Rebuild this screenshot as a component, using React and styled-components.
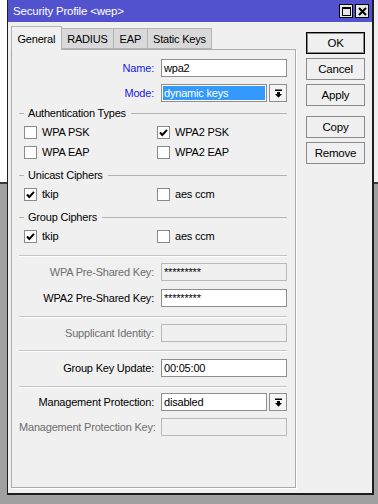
import React from "react";
import styled, { createGlobalStyle } from "styled-components";

const GlobalStyle = createGlobalStyle`
  html, body { margin: 0; padding: 0; }
  body {
    background: #a0a0a0;
    font-family: "Liberation Sans", Arial, sans-serif;
    font-size: 11px;
    letter-spacing: -0.2px;
    color: #000;
  }
`;

const Desktop = styled.div`
  position: relative;
  width: 378px;
  height: 504px;
  overflow: hidden;
  background: #a0a0a0;
`;

const BackWindow = styled.div`
  position: absolute;
  left: -10px;
  top: -10px;
  width: 398px;
  height: 192px;
  background: #f0f0f0;
  border-bottom: 2px solid #3a3a3a;
  display: flex;
`;

const BackList = styled.div`
  width: 17px;
  background: #ffffff;
`;

const Window = styled.section`
  position: absolute;
  left: 7px;
  top: 0;
  width: 367px;
  height: 495px;
  box-sizing: border-box;
  background: #f0f0f0;
  border-left: 1px solid #1e1e1e;
  border-right: 2px solid #1e1e1e;
  border-bottom: 2px solid #1e1e1e;
  display: flex;
  flex-direction: column;
`;

const TitleBar = styled.header`
  height: 22px;
  flex: none;
  background: #5252cf;
  color: #fff;
  display: flex;
  align-items: center;
  justify-content: space-between;
  padding: 0 3px 0 5px;
  font-size: 11.5px;
`;

const TitleButtons = styled.div`
  display: flex;
  gap: 2px;
`;

const TitleButton = styled.div`
  width: 14px;
  height: 14px;
  box-sizing: border-box;
  background: #e6e6e6;
  border: 1px solid #000;
  display: flex;
  align-items: center;
  justify-content: center;
`;

const Body = styled.div`
  flex: 1;
  display: flex;
  padding: 4px 0 5px 3px;
  min-height: 0;
`;

const TabArea = styled.div`
  width: 285px;
  display: flex;
  flex-direction: column;
`;

const TabStrip = styled.div`
  display: flex;
  height: 23px;
  align-items: flex-end;
  position: relative;
  z-index: 1;
`;

const Tab = styled.div`
  box-sizing: border-box;
  height: ${(p) => (p.$active ? "24px" : "21px")};
  padding: 0 5.5px;
  display: flex;
  align-items: center;
  background: ${(p) => (p.$active ? "#f0f0f0" : "#d9d9d9")};
  border: 1px solid #b4b4b4;
  border-bottom: ${(p) => (p.$active ? "none" : "1px solid #b4b4b4")};
  margin-left: ${(p) => (p.$first ? "0" : "-1px")};
  margin-bottom: ${(p) => (p.$active ? "-1px" : "0")};
  white-space: nowrap;
  position: relative;
  z-index: ${(p) => (p.$active ? 2 : 1)};
`;

const Panel = styled.div`
  flex: 1;
  box-sizing: border-box;
  border: 1px solid #acacac;
  box-shadow: 1px 1px 0 #ffffff;
  padding: 9px 8px 0 7px;
  display: flex;
  flex-direction: column;
`;

const FieldRow = styled.div`
  display: grid;
  grid-template-columns: 135px 126px;
  column-gap: 7px;
  align-items: center;
  height: 18px;
  margin-top: ${(p) => p.$mt || 0}px;
`;

const Label = styled.label`
  text-align: right;
  white-space: nowrap;
  color: ${(p) =>
    p.$tone === "blue" ? "#1818e0" : p.$tone === "muted" ? "#6e6e6e" : "#000"};
`;

const TextBox = styled.div`
  box-sizing: border-box;
  height: 18px;
  border: 1px solid ${(p) => (p.$disabled ? "#b9b9b9" : "#8e8e8e")};
  background: ${(p) => (p.$disabled ? "#f0f0f0" : "#ffffff")};
  padding: 0 2px;
  display: flex;
  align-items: center;
  white-space: nowrap;
  overflow: hidden;
`;

const SelectWrap = styled.div`
  display: flex;
  gap: 2px;
`;

const SelectField = styled.div`
  box-sizing: border-box;
  width: 106px;
  height: 18px;
  border: 1px solid #8e8e8e;
  background: #fff;
  padding: 1px;
  display: flex;
`;

const SelectValue = styled.span`
  flex: 1;
  display: flex;
  align-items: center;
  padding-left: 1px;
  background: ${(p) => (p.$selected ? "#3399ff" : "transparent")};
  color: ${(p) => (p.$selected ? "#fff" : "#000")};
`;

const DropButton = styled.div`
  box-sizing: border-box;
  width: 18px;
  height: 18px;
  border: 1px solid #8e8e8e;
  background: #f4f4f4;
  display: flex;
  align-items: center;
  justify-content: center;
`;

const GroupHeader = styled.div`
  display: flex;
  align-items: center;
  height: 16px;
  margin-top: ${(p) => p.$mt || 0}px;
  &::before,
  &::after {
    content: "";
    height: 1px;
    background: #b4b4b4;
  }
  &::before {
    width: 5px;
    margin-right: 4px;
  }
  &::after {
    flex: 1;
    margin-left: 5px;
  }
`;

const CheckRow = styled.div`
  display: grid;
  grid-template-columns: 133px 1fr;
  padding-left: 5px;
  height: 20px;
  align-items: center;
  margin-top: ${(p) => p.$mt || 0}px;
`;

const CheckItem = styled.div`
  display: flex;
  align-items: center;
  gap: 5px;
`;

const CheckBox = styled.span`
  box-sizing: border-box;
  width: 13px;
  height: 13px;
  border: 1px solid #8a8a8a;
  background: #fff;
  display: inline-flex;
  align-items: center;
  justify-content: center;
`;

const Separator = styled.div`
  height: 1px;
  background: #c4c4c4;
  border-bottom: 1px solid #fff;
  margin-top: ${(p) => p.$mt || 0}px;
`;

const ButtonColumn = styled.div`
  display: flex;
  flex-direction: column;
  margin-left: 10px;
  padding-top: 6px;
  width: 59px;
`;

const Button = styled.div`
  box-sizing: border-box;
  height: 22px;
  display: flex;
  align-items: center;
  justify-content: center;
  background: #f0f0f0;
  border: 1px solid ${(p) => (p.$default ? "#000" : "#8a8a8a")};
  box-shadow: ${(p) => (p.$default ? "inset 0 0 0 1px #8a8a8a" : "none")};
  margin-top: ${(p) => (p.$spaced ? 10 : 4)}px;
  &:first-child {
    margin-top: 0;
  }
  font-size: 11.5px;
`;

const CheckMark = () => (
  <svg width="9" height="9" viewBox="0 0 9 9">
    <polyline points="1,4.5 3.3,7 8,1.8" fill="none" stroke="#000" strokeWidth="2" />
  </svg>
);

const DropIcon = () => (
  <svg width="9" height="9" viewBox="0 0 9 9">
    <rect x="1" y="0.5" width="7" height="1.5" fill="#000" />
    <rect x="3" y="3" width="3" height="2" fill="#000" />
    <polygon points="1,5 8,5 4.5,8.7" fill="#000" />
  </svg>
);

const MaxIcon = () => (
  <svg width="9" height="9" viewBox="0 0 9 9">
    <rect x="0.5" y="0.5" width="8" height="8" fill="none" stroke="#000" strokeWidth="1" />
    <rect x="0.5" y="0.5" width="8" height="1.5" fill="#000" />
  </svg>
);

const CloseIcon = () => (
  <svg width="9" height="9" viewBox="0 0 9 9">
    <path d="M1 1 L8 8 M8 1 L1 8" stroke="#000" strokeWidth="2" />
  </svg>
);

const Check = ({ checked, children }) => (
  <CheckItem>
    <CheckBox>{checked && <CheckMark />}</CheckBox>
    <span>{children}</span>
  </CheckItem>
);

const Select = ({ value, selected }) => (
  <SelectWrap>
    <SelectField>
      <SelectValue $selected={selected}>{value}</SelectValue>
    </SelectField>
    <DropButton>
      <DropIcon />
    </DropButton>
  </SelectWrap>
);

export default function App() {
  return (
    <>
      <GlobalStyle />
      <Desktop>
        <BackWindow>
          <BackList />
        </BackWindow>
        <Window>
          <TitleBar>
            <span>Security Profile &lt;wep&gt;</span>
            <TitleButtons>
              <TitleButton>
                <MaxIcon />
              </TitleButton>
              <TitleButton>
                <CloseIcon />
              </TitleButton>
            </TitleButtons>
          </TitleBar>
          <Body>
            <TabArea>
              <TabStrip>
                <Tab $active $first>General</Tab>
                <Tab>RADIUS</Tab>
                <Tab>EAP</Tab>
                <Tab>Static Keys</Tab>
              </TabStrip>
              <Panel>
                <FieldRow>
                  <Label $tone="blue">Name:</Label>
                  <TextBox>wpa2</TextBox>
                </FieldRow>
                <FieldRow $mt={7}>
                  <Label $tone="blue">Mode:</Label>
                  <Select value="dynamic keys" selected />
                </FieldRow>

                <GroupHeader $mt={3}>Authentication Types</GroupHeader>
                <CheckRow $mt={1}>
                  <Check>WPA PSK</Check>
                  <Check checked>WPA2 PSK</Check>
                </CheckRow>
                <CheckRow>
                  <Check>WPA EAP</Check>
                  <Check>WPA2 EAP</Check>
                </CheckRow>

                <GroupHeader $mt={5}>Unicast Ciphers</GroupHeader>
                <CheckRow $mt={1}>
                  <Check checked>tkip</Check>
                  <Check>aes ccm</Check>
                </CheckRow>

                <GroupHeader $mt={5}>Group Ciphers</GroupHeader>
                <CheckRow $mt={1}>
                  <Check checked>tkip</Check>
                  <Check>aes ccm</Check>
                </CheckRow>

                <Separator $mt={9} />
                <FieldRow $mt={6}>
                  <Label $tone="muted">WPA Pre-Shared Key:</Label>
                  <TextBox $disabled>*********</TextBox>
                </FieldRow>
                <FieldRow $mt={8}>
                  <Label>WPA2 Pre-Shared Key:</Label>
                  <TextBox>*********</TextBox>
                </FieldRow>

                <Separator $mt={9} />
                <FieldRow $mt={6}>
                  <Label $tone="muted">Supplicant Identity:</Label>
                  <TextBox $disabled />
                </FieldRow>

                <Separator $mt={8} />
                <FieldRow $mt={7}>
                  <Label>Group Key Update:</Label>
                  <TextBox>00:05:00</TextBox>
                </FieldRow>

                <Separator $mt={9} />
                <FieldRow $mt={5}>
                  <Label>Management Protection:</Label>
                  <Select value="disabled" />
                </FieldRow>
                <FieldRow $mt={7}>
                  <Label $tone="muted">Management Protection Key:</Label>
                  <TextBox $disabled />
                </FieldRow>
              </Panel>
            </TabArea>
            <ButtonColumn>
              <Button $default>OK</Button>
              <Button>Cancel</Button>
              <Button>Apply</Button>
              <Button $spaced>Copy</Button>
              <Button>Remove</Button>
            </ButtonColumn>
          </Body>
        </Window>
      </Desktop>
    </>
  );
}
